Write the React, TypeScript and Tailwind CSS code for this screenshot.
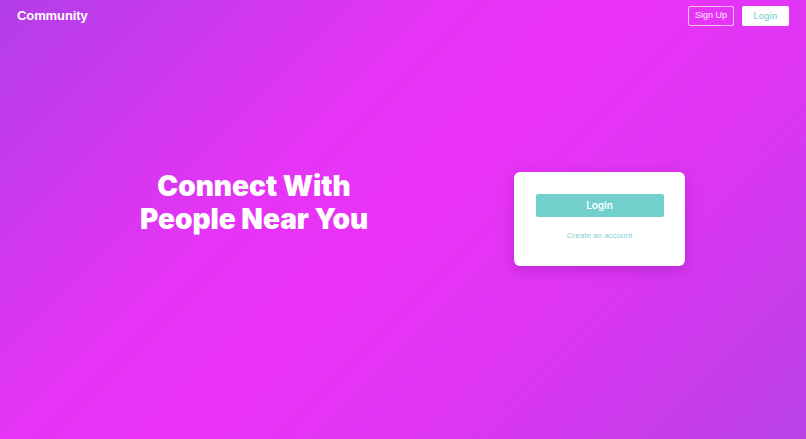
export default function App() {
  return (
    <div
      className="flex h-[439px] w-full flex-col overflow-hidden bg-[linear-gradient(135deg,#b23ee6_0%,#e434f5_35%,#ea33f7_50%,#de35f3_70%,#b842e5_100%)]"
      style={{ fontFamily: '"Liberation Sans", Arial, sans-serif' }}
    >
      <header className="flex h-[32px] items-center justify-between pl-[17px] pr-[17px]">
        <div className="text-[13px] font-bold tracking-[-0.1px] text-white">Community</div>
        <div className="flex items-center gap-[8px]">
          <button className="h-[20px] w-[46px] rounded-[2px] border border-white/70 text-[9px] text-white/90">
            Sign Up
          </button>
          <button
            className="h-[20px] w-[47px] rounded-[2px] bg-white text-[9px] font-medium text-[#7fd3cf]"
            style={{ fontFamily: 'Inter, "Noto Sans", sans-serif' }}
          >
            Login
          </button>
        </div>
      </header>

      <main className="flex flex-1 items-start pl-[104px] pt-[138px]">
        <div className="w-[300px] text-center">
          <h1
            className="text-[28px] font-black leading-[33px] tracking-[0px] text-white"
            style={{ fontFamily: 'Inter, "Noto Sans", sans-serif' }}
          >
            Connect With
            <br />
            People Near You
          </h1>
        </div>
        <div className="ml-[110px] mt-[2px] flex h-[94px] w-[171px] flex-col items-center rounded-[6px] bg-white pt-[22px] shadow-[0_4px_14px_rgba(80,0,120,0.25)]">
          <button
            className="h-[23px] w-[128px] rounded-[2px] bg-[#72d0cc] text-[10px] font-semibold text-white"
            style={{ fontFamily: 'Inter, "Noto Sans", sans-serif' }}
          >
            Login
          </button>
          <a className="mt-[13px] text-[8px] text-[#7fcfd0]">Create an account</a>
        </div>
      </main>
    </div>
  );
}
